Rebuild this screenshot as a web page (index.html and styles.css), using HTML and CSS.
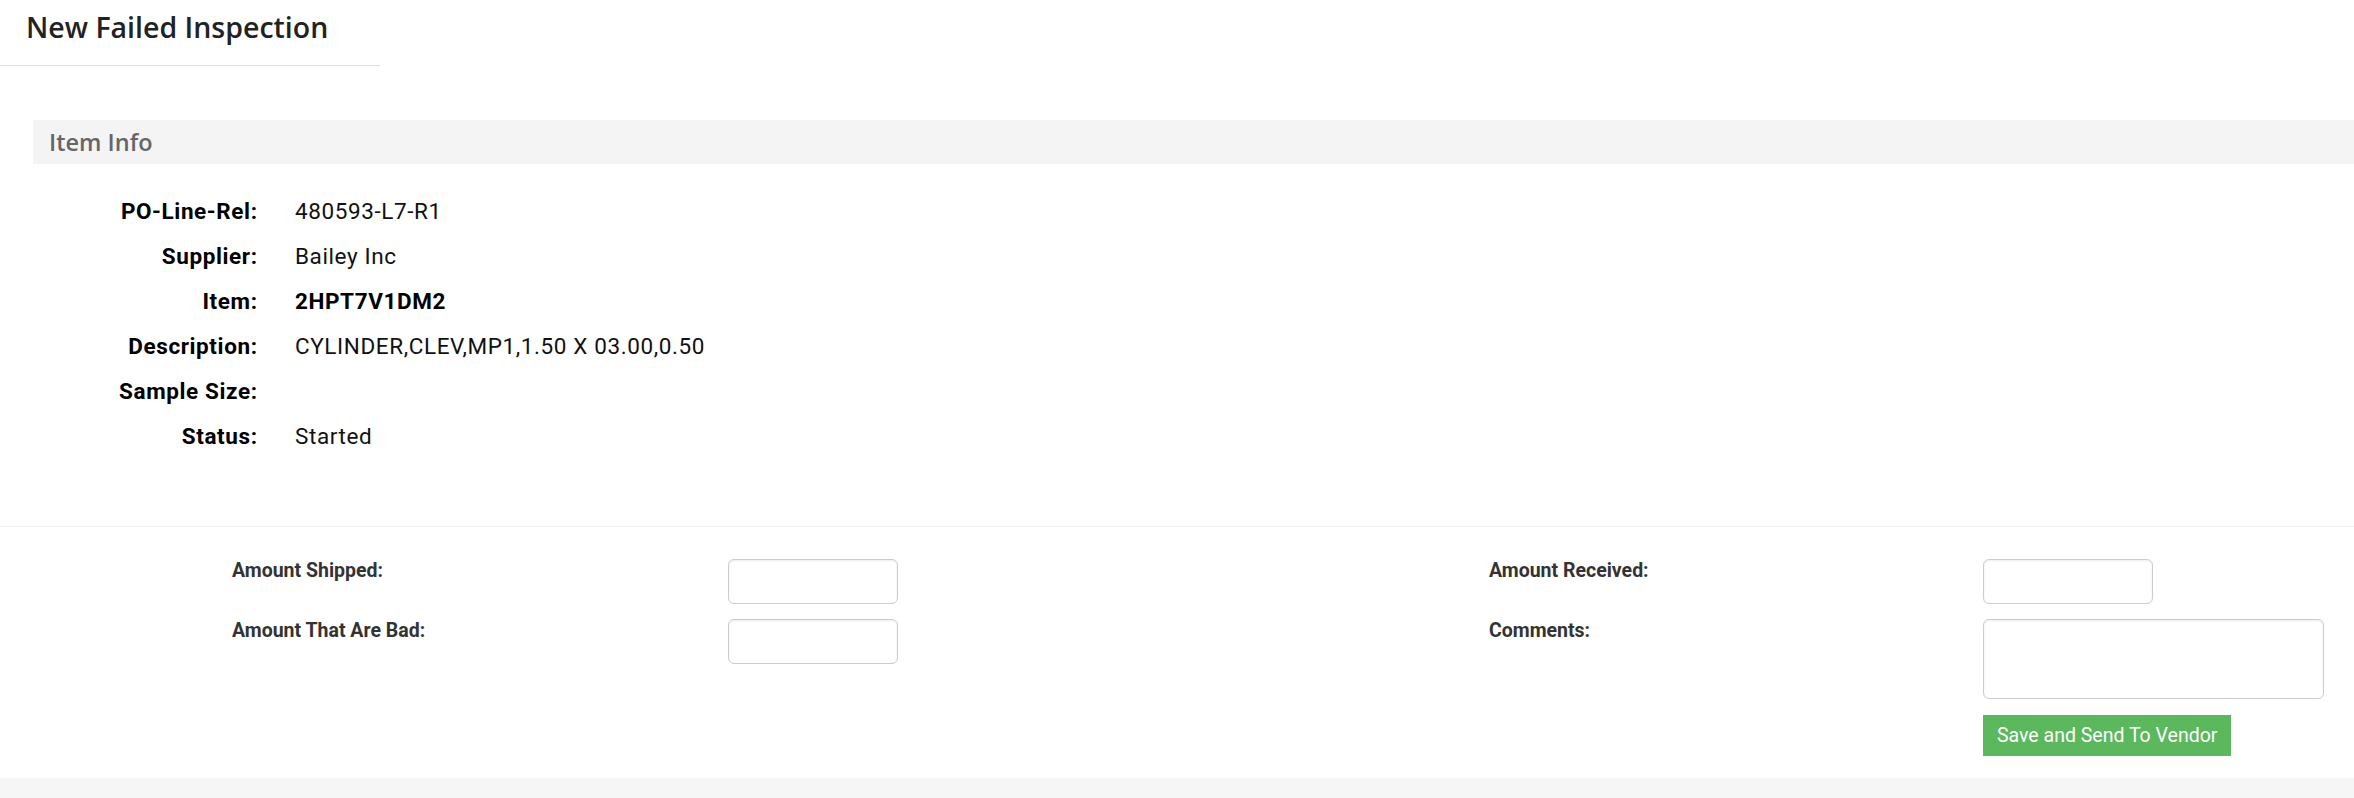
FILE: index.html
```html
<!DOCTYPE html>
<html lang="en">

<head>
  <meta charset="UTF-8">
  <meta name="viewport" content="width=device-width, initial-scale=1.0">
  <title>New Failed Inspection</title>
  <link rel="stylesheet" href="styles.css">
</head>

<body>

  <div class="page">

    <div class="page-title">
      <h1>New Failed Inspection</h1>
    </div>

    <section class="item-info">
      <div class="section-bar">Item Info</div>

      <dl class="info-list">
        <dt>PO-Line-Rel:</dt>
        <dd>480593-L7-R1</dd>
        <dt>Supplier:</dt>
        <dd>Bailey Inc</dd>
        <dt>Item:</dt>
        <dd class="strong">2HPT7V1DM2</dd>
        <dt>Description:</dt>
        <dd>CYLINDER,CLEV,MP1,1.50 X 03.00,0.50</dd>
        <dt>Sample Size:</dt>
        <dd></dd>
        <dt>Status:</dt>
        <dd>Started</dd>
      </dl>
    </section>

    <!-- Failed inspection amounts -->
    <form class="inspection-form" onsubmit="return false">
      <label for="shipped">Amount Shipped:</label>
      <input type="text" class="input-field" id="shipped">

      <label for="received">Amount Received:</label>
      <input type="text" class="input-field" id="received">

      <label for="bad">Amount That Are Bad:</label>
      <input type="text" class="input-field" id="bad">

      <label for="comments">Comments:</label>
      <textarea class="input-field comments" id="comments"></textarea>

      <button type="submit" class="send-btn">Save and Send To Vendor</button>
    </form>

  </div>

</body>

</html>
```

FILE: styles.css
```css
* {
  margin: 0;
  padding: 0;
  box-sizing: border-box;
}

body {
  background-color: #f6f6f6;
  font-family: Roboto, "Liberation Sans", Arial, sans-serif;
  color: #111;
}

.page {
  background-color: #fff;
  box-shadow: 0 2px 4px rgba(0, 0, 0, 0.12);
}

.page-title {
  width: 380px;
  padding: 7px 0 18px 26px;
  border-bottom: 1px solid #ddd;
}

.page-title h1 {
  font-family: "Open Sans", "Noto Sans", sans-serif;
  font-size: 28.5px;
  font-weight: 600;
  line-height: 40px;
  color: #222;
}

/* Item info */
.item-info {
  padding-top: 54px;
  padding-bottom: 67px;
}

.section-bar {
  margin-left: 33px;
  height: 44px;
  padding-left: 16px;
  display: flex;
  align-items: center;
  background-color: #f4f4f4;
  font-family: "Open Sans", "Noto Sans", sans-serif;
  font-size: 23.5px;
  font-weight: 600;
  color: #666;
}

.info-list {
  display: grid;
  grid-template-columns: 224px 1fr;
  column-gap: 38px;
  margin-top: 25px;
  padding-left: 33px;
  font-size: 22.5px;
  letter-spacing: 0.6px;
  line-height: 45px;
}

.info-list dt {
  font-weight: 700;
  text-align: right;
  margin-right: -0.6px;
  color: #000;
}

.info-list dd {
  min-height: 45px;
}

.info-list .strong {
  font-weight: 700;
  color: #000;
}

/* Form */
.inspection-form {
  display: grid;
  grid-template-columns: 496px 761px 494px 1fr;
  row-gap: 15px;
  padding: 32px 0 22px 232px;
  border-top: 1px solid #eee;
}

.inspection-form label {
  font-size: 19.5px;
  font-weight: 700;
  color: #333;
}

.input-field {
  width: 170px;
  height: 45px;
  border: 1px solid #ccc;
  border-radius: 6px;
  box-shadow: inset 0 1px 2px rgba(0, 0, 0, 0.08);
  font-family: inherit;
  font-size: 19.5px;
  padding: 6px 12px;
}

.comments {
  width: 341px;
  height: 80px;
  resize: none;
}

.send-btn {
  grid-column: 4;
  justify-self: start;
  margin-top: 1px;
  height: 41px;
  padding: 0 14px;
  font-family: inherit;
  font-size: 19.5px;
  color: #fff;
  background-color: #5cb85c;
  border: none;
  cursor: pointer;
}

.send-btn:hover {
  background-color: #4cae4c;
}
```
